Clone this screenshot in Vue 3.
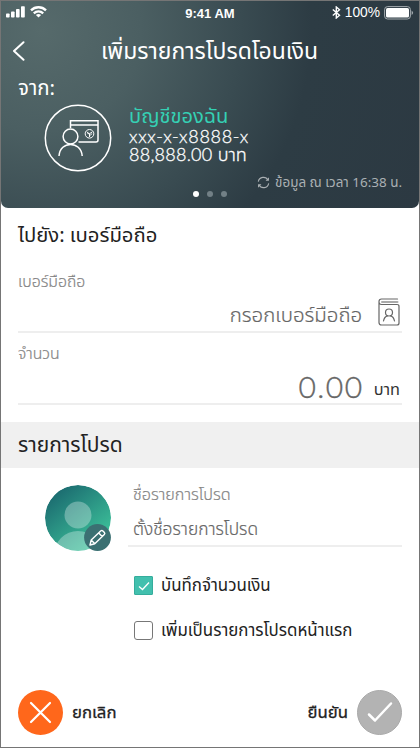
<script setup>
import { ref } from 'vue'

const saveAmount = ref(true)
const addToHome = ref(false)
</script>

<template>
  <main class="screen">
    <header class="hero">
      <div class="status">
        <div class="status-left">
          <svg width="19" height="12" viewBox="0 0 19 12" fill="#fff">
            <rect x="0" y="7.5" width="3.6" height="4" rx="0.8" />
            <rect x="5" y="5.5" width="3.6" height="6" rx="0.8" />
            <rect x="10" y="3" width="3.6" height="8.5" rx="0.8" />
            <rect x="15" y="0.3" width="3.8" height="11.2" rx="0.8" />
          </svg>
          <svg width="17" height="12" viewBox="0 0 17 12" fill="none" stroke="#fff" stroke-width="2.3">
            <path d="M1 4.4C5.2.2 11.8.2 16 4.4" />
            <path d="M3.8 7.3c2.7-2.6 6.7-2.6 9.4 0" />
            <path d="M8.5 11.6 5.9 9c1.5-1.4 3.7-1.4 5.2 0z" fill="#fff" stroke="none" />
          </svg>
        </div>
        <span class="clock">9:41 AM</span>
        <div class="status-right">
          <svg width="9" height="13" viewBox="0 0 9 13" fill="none" stroke="#fff" stroke-width="1.4">
            <path d="M.8 3.5 7.5 9.3 4.3 12V1l3.2 2.700L.8 9.500" />
          </svg>
          <span class="percent">100%</span>
          <svg width="30" height="14" viewBox="0 0 30 14">
            <rect x=".6" y=".6" width="25.8" height="12.4" rx="3" fill="none" stroke="#a5acb0" />
            <rect x="2" y="2" width="23" height="9.6" rx="1.6" fill="#fff" />
            <path d="M27.600 4.500q3 2.300 0 4.600z" fill="#a5acb0" />
          </svg>
        </div>
      </div>

      <div class="titlebar">
        <svg class="back" width="13" height="20" viewBox="0 0 13 20" fill="none" stroke="#fff" stroke-width="2" stroke-linecap="round" stroke-linejoin="round">
          <path d="M11.500 1.200 2 10 11.500 18.800" />
        </svg>
        <h1 class="title">เพิ่มรายการโปรดโอนเงิน</h1>
      </div>

      <div class="from">จาก:</div>

      <div class="account">
        <svg width="68" height="68" viewBox="0 0 68 68" fill="none" stroke="#fff" stroke-width="1.500">
          <circle cx="34" cy="34" r="32.700" />
          <path d="M26.500 24V16.800H54V36q0 2-2 2H34.500M26.500 21H54" />
          <circle cx="26.500" cy="32.500" r="7.400" />
          <path d="M15 52c1-15.500 22-15.500 23.200 0" />
          <circle cx="45.500" cy="29.800" r="4.300" stroke-width="1" />
          <path d="m43 28 2.300 1.800L48.200 28M45.500 33v-3.200l-2-.3m4.300 0-1.500 2" stroke-width="1" />
        </svg>
        <div class="account-text">
          <div class="account-name">บัญชีของฉัน</div>
          <div class="account-no">xxx-x-x8888-x</div>
          <div class="balance">88,888.00 <span class="balance-unit">บาท</span></div>
        </div>
      </div>

      <div class="hero-foot">
        <div class="dots"><i class="dot on"></i><i class="dot"></i><i class="dot"></i></div>
        <div class="updated">
          <svg width="13" height="13" viewBox="0 0 13 13" fill="none" stroke="#aab0b3" stroke-width="1.100">
            <path d="M1.300 5.600C2.200.4 9 .1 10.900 4M11.700 7.400c-.9 5.200-7.700 5.500-9.600 1.600" />
            <path d="M11.400 1.800v2.500H8.900M1.600 11.200V8.700h2.500" />
          </svg>
          <span class="updated-text">ข้อมูล ณ เวลา 16:38 น.</span>
        </div>
      </div>
    </header>

    <section class="transfer">
      <h2 class="to">ไปยัง: เบอร์มือถือ</h2>
      <div class="label label-phone">เบอร์มือถือ</div>
      <div class="field phone">
        <span class="placeholder">กรอกเบอร์มือถือ</span>
        <svg width="22" height="28" viewBox="0 0 22 28" fill="none" stroke="#666" stroke-width="1.200" stroke-linecap="round">
          <path d="M19.500 1H3.500q-2.500 0-2.500 2.600V24.500q0 2.500 2.500 2.500H19q2 0 2-2V8.500q0-2-2-2H3.500Q1 6.500 1 4" />
          <path d="M19.500 4H4" stroke-width="2" stroke="#aaa" />
          <circle cx="11" cy="14.500" r="3.500" />
          <path d="M5.500 23c.6-3.200 2.300-4.800 4-5.200M16.500 23c-.6-3.200-2.300-4.800-4-5.200" />
        </svg>
      </div>
      <div class="label label-amount">จำนวน</div>
      <div class="field amount">
        <span class="amount-num">0.00</span>
        <span class="amount-unit">บาท</span>
      </div>
    </section>

    <h2 class="section-head"><span>รายการโปรด</span></h2>

    <section class="favorite">
      <div class="avatar">
        <svg width="67" height="67" viewBox="0 0 67 67">
          <defs>
            <linearGradient id="avatarFill" x1=".15" y1=".1" x2=".75" y2=".85">
              <stop offset="0" stop-color="#1b6b70" />
              <stop offset="1" stop-color="#3bbd98" />
            </linearGradient>
            <clipPath id="avatarClip"><circle cx="33" cy="33" r="33" /></clipPath>
          </defs>
          <g clip-path="url(#avatarClip)">
            <circle cx="33" cy="33" r="33" fill="url(#avatarFill)" />
            <circle cx="33" cy="30" r="13.500" fill="#fff" opacity=".3" />
            <circle cx="33" cy="70" r="24" fill="#fff" opacity=".3" />
          </g>
          <circle cx="52.500" cy="52.500" r="13.400" fill="#3b7072" />
          <path d="m45 60 1.200-5 9.700-9.200q1-.8 2 .1l1.500 1.600q.9 1-.1 2L49.800 58.700zM53.700 48l3.500 3.500M46.200 55l3.600 3.700" fill="none" stroke="#fff" stroke-width="1.400" stroke-linejoin="round" />
        </svg>
      </div>
      <div class="favorite-form">
        <div class="label label-name">ชื่อรายการโปรด</div>
        <div class="name-field"><span class="name-placeholder">ตั้งชื่อรายการโปรด</span></div>
        <div class="option option-save" @click="saveAmount = !saveAmount">
          <span class="box" :class="{ checked: saveAmount }">
            <svg v-if="saveAmount" width="12" height="10" viewBox="0 0 12 10" fill="none" stroke="#fff" stroke-width="1.300"><path d="m1 5.500 3.500 3L11 1.500" /></svg>
          </span>
          <span class="option-save-text">บันทึกจำนวนเงิน</span>
        </div>
        <div class="option option-home" @click="addToHome = !addToHome">
          <span class="box" :class="{ checked: addToHome }"></span>
          <span class="option-home-text">เพิ่มเป็นรายการโปรดหน้าแรก</span>
        </div>
      </div>
    </section>

    <footer class="actions">
      <div class="action">
        <svg width="45" height="45" viewBox="0 0 45 45">
          <circle cx="22.500" cy="22.500" r="22.500" fill="#ff671b" />
          <path d="m13 13 19 19M32 13 13 32" stroke="#fff" stroke-width="2.200" stroke-linecap="round" />
        </svg>
        <span class="cancel-text">ยกเลิก</span>
      </div>
      <div class="action">
        <span class="confirm-text">ยืนยัน</span>
        <svg width="45" height="45" viewBox="0 0 45 45">
          <circle cx="22.500" cy="22.500" r="22" fill="#b3b3b3" stroke="#a9a9a9" />
          <path d="m12 24.500 6 6L34 13.500" fill="none" stroke="#fff" stroke-width="2.500" stroke-linecap="round" stroke-linejoin="round" />
        </svg>
      </div>
    </footer>
  </main>
</template>

<style>
body { margin: 0; background: #fff; }
</style>

<style scoped>
* { box-sizing: border-box; }
.screen {
  width: 420px;
  height: 748px;
  border: 1px solid #757575;
  background: #fff;
  color: #222;
  font-family: "Noto Sans Thai", "Prompt", "Open Sans", "Noto Sans", sans-serif;
  white-space: nowrap;
  overflow: hidden;
  display: flex;
  flex-direction: column;
}
svg { display: block; flex: none; }
h1, h2 { margin: 0; font-weight: 400; }
.hero {
  height: 207px;
  flex: none;
  color: #fff;
  border-radius: 0 0 7px 7px;
  background: radial-gradient(circle at 40px 30px, #566a6b 0, #4b5f62 100px, #394b51 200px, #2d3c44 270px, #2c3942 100%);
  display: flex;
  flex-direction: column;
}
.status { height: 23px; display: grid; grid-template-columns: 1fr auto 1fr; align-items: center; padding: 1px 5px 0; font-family: "Liberation Sans", sans-serif; }
.status-left { display: flex; gap: 5px; align-items: center; padding-bottom: 2px; }
.status-right { display: flex; gap: 4px; align-items: center; justify-content: flex-end; padding-bottom: 1px; }
.clock { font-size: 13px; font-weight: 700; }
.percent { font-size: 13.800px; }
.titlebar { height: 54px; display: flex; align-items: center; padding-left: 11px; }
.title { font-size: 22.950px; line-height: 40px; margin-left: 76px; padding-top: 2px; }
.from { height: 22px; line-height: 22px; padding-left: 17px; font-size: 20.500px; }
.account { display: flex; padding: 4px 0 0 43px; height: 74px; gap: 17px; }
.account-name { height: 24px; line-height: 26px; font-size: 20.100px; color: #35d0b4; }
.account-no, .balance { height: 18px; line-height: 17px; font-size: 18px; font-family: Lato, "Noto Sans Thai", "Open Sans", sans-serif; font-weight: 300; letter-spacing: .7px; -webkit-text-stroke: .3px; }
.balance { letter-spacing: .25px; }
.balance-unit { letter-spacing: 0; }
.hero-foot { height: 34px; display: grid; grid-template-columns: 1fr auto 1fr; }
.dots { grid-column: 2; display: flex; gap: 8px; align-items: center; padding-top: 6px; }
.dot { width: 6px; height: 6px; border-radius: 50%; background: #728086; }
.dot.on { background: #fff; }
.updated { display: flex; justify-content: flex-end; gap: 5px; align-items: center; height: 17px; padding-right: 17px; font-size: 13.450px; color: #aab0b3; }
.transfer { padding: 0 17px; height: 211px; flex: none; display: flex; flex-direction: column; }
.to { height: 53px; line-height: 56px; font-size: 20.300px; }
.label { color: #858585; font-weight: 300; font-size: 15.800px; height: 24px; line-height: 27px; -webkit-text-stroke: .2px; }
.label-phone { margin-top: 8px; }
.field { display: flex; justify-content: flex-end; border-bottom: 2px solid #eee; align-items: center; color: #666; }
.phone { height: 40px; gap: 16px; padding-right: 2px; font-size: 20.400px; font-weight: 300; -webkit-text-stroke: .2px; }
.placeholder { padding-top: 6px; }
.label-amount { margin-top: 9px; line-height: 25px; }
.amount { height: 39px; gap: 10px; padding-right: 2px; }
.amount-num { font: 300 30px Lato, sans-serif; letter-spacing: 1.500px; padding-top: 3px; -webkit-text-stroke: .4px; }
.amount-unit { color: #333; font-size: 16.300px; padding-top: 10px; }
.section-head { margin-top: 3px; height: 46px; flex: none; line-height: 48px; padding-left: 17px; background: #f0f0f0; font-size: 21px; }
.favorite { display: flex; padding: 17px 17px 0 44px; height: 215px; }
.favorite-form { width: 274px; margin-left: 16px; }
.label-name { padding-left: 5px; margin-top: -3px; font-size: 16.200px; line-height: 26px; }
.name-field { height: 41px; padding: 12px 0 0 5px; border-bottom: 2px solid #eee; font-size: 17.400px; font-weight: 300; line-height: 24px; color: #666; -webkit-text-stroke: .2px; }
.option { display: flex; align-items: center; gap: 8px; padding-left: 6px; height: 45px; font-size: 16.900px; }
.option-save { margin-top: 16px; }
.box { width: 19px; height: 19px; border: 1px solid #777; border-radius: 3px; display: flex; align-items: center; justify-content: center; }
.box.checked { background: #42c0ae; border-color: #35ad9c; border-radius: 1px; }
.actions { display: flex; justify-content: space-between; padding: 7px 17px 0; }
.action { display: flex; align-items: center; gap: 9px; font-size: 16.800px; -webkit-text-stroke: .3px; }
</style>
